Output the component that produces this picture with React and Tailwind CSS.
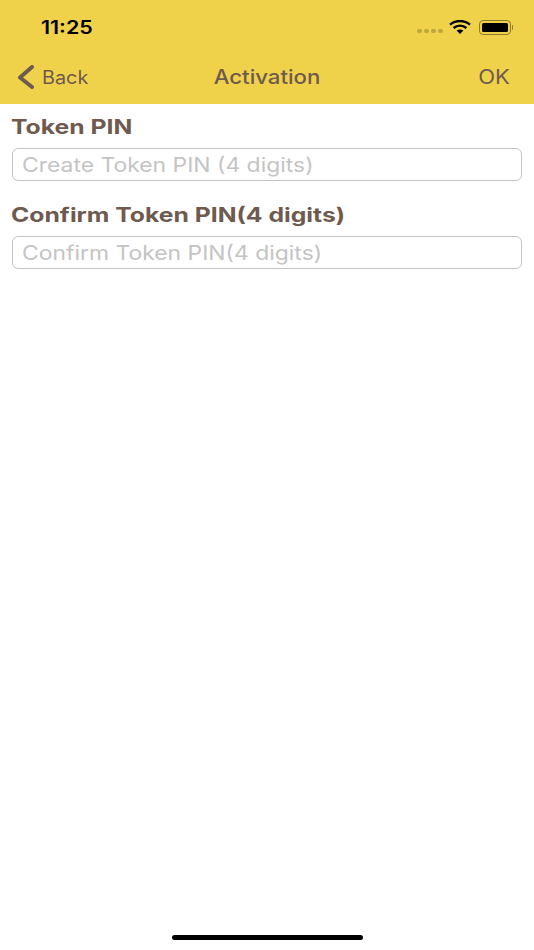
const brown = 'text-[#6f5a50]';

const Field = ({ label, placeholder }) => (
  <div className="flex flex-col">
    <label className={`h-[32px] mb-[6px] pt-[1px] flex items-center text-[20px] font-bold leading-none ${brown}`}>
      <span className="inline-block origin-left scale-x-[1.236] whitespace-nowrap -ml-[1px]">{label}</span>
    </label>
    <div className="h-[33px] border-[1.5px] border-[#c4c4c4] rounded-[6px] flex items-center px-[9px] text-[20px] text-[#c4c4c4]">
      <span className="inline-block origin-left scale-x-[1.145] whitespace-nowrap">{placeholder}</span>
    </div>
  </div>
);

const Wifi = () => (
  <svg width="22" height="14" viewBox="0 0 22 14" fill="none" stroke="#000" strokeWidth="2.4">
    <path d="M1 4.6C6.8 -0.2 15.2 -0.2 21 4.6" />
    <path d="M4.6 8C8.4 5 13.6 5 17.4 8" />
    <path d="M11 14L7.6 10.6C9.6 9.2 12.4 9.2 14.4 10.6Z" fill="#000" stroke="none" />
  </svg>
);

const Battery = () => (
  <div className="flex items-center gap-[1px]">
    <div className="w-[32px] h-[15px] rounded-[4px] border border-[#8f7c2c] p-[2px]">
      <div className="w-full h-full bg-black rounded-[1.5px]"></div>
    </div>
    <div className="w-[1.5px] h-[5px] bg-[#8f7c2c] rounded-r-sm"></div>
  </div>
);

export default function App() {
  return (
    <div className="relative w-[534px] h-[950px] bg-white overflow-hidden font-['Inter',sans-serif]">
      <div className="h-[104px] bg-[#f0d24a] flex flex-col">
        {/* status bar */}
        <div className="h-[54px] flex items-center justify-between pl-[41px] pr-[21px]">
          <span className="text-[18px] font-semibold text-black inline-block origin-left scale-x-[1.19]">11:25</span>
          <div className="flex items-center">
            <div className="flex gap-[2px] mt-[8px] mr-[6px]">
              <span className="w-[5px] h-[4px] rounded-full bg-[#bda63d]"></span>
              <span className="w-[5px] h-[4px] rounded-full bg-[#bda63d]"></span>
              <span className="w-[5px] h-[4px] rounded-full bg-[#bda63d]"></span>
              <span className="w-[5px] h-[4px] rounded-full bg-[#bda63d]"></span>
            </div>
            <Wifi />
            <div className="w-[8px]"></div>
            <Battery />
          </div>
        </div>
        {/* nav */}
        <div className="h-[46px] flex items-center justify-between pl-[17px] pr-[24px] text-[18px] text-[#6f5a50]">
          <div className="flex items-center w-[100px]">
            <svg width="18" height="24" viewBox="0 0 18 24" fill="none" stroke="#6f5a50" strokeWidth="4" strokeLinecap="round" strokeLinejoin="round">
              <path d="M15 2L3 12.5L15 22" />
            </svg>
            <span className="ml-[7px] inline-block origin-left scale-x-[1.1]">Back</span>
          </div>
          <span className="text-[20px] font-medium inline-block scale-x-[1.11]">Activation</span>
          <div className="w-[93px] text-right">
            <span className="text-[20px] inline-block origin-right scale-x-[1.1]">OK</span>
          </div>
        </div>
      </div>
      <div className="px-[12px] pt-[6px] flex flex-col gap-[17px]">
        <Field label="Token PIN" placeholder="Create Token PIN (4 digits)" />
        <Field label="Confirm Token PIN(4 digits)" placeholder="Confirm Token PIN(4 digits)" />
      </div>
      <div className="absolute bottom-[10px] left-[172px] w-[191px] h-[5px] rounded-full bg-black"></div>
    </div>
  );
}
